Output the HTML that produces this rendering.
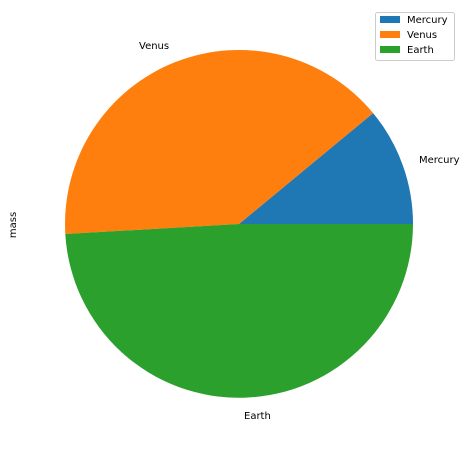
<!DOCTYPE html>
<html><head><meta charset="utf-8"><style>
html,body{margin:0;padding:0;background:#fff;}
svg{display:block;}
text{font-family:"DejaVu Sans","Liberation Sans",sans-serif;font-size:10px;fill:#000;}
</style></head><body>
<svg width="466" height="449" viewBox="0 0 466 449">
<rect width="466" height="449" fill="#fff"/>
<path d="M239,224 L413,224 A174,174 0 0 0 373.1,113.1 Z" fill="#1f77b4"/>
<path d="M239,224 L373.1,113.1 A174,174 0 0 0 65.3,234 Z" fill="#ff7f0e"/>
<path d="M239,224 L65.3,234 A174,174 0 0 0 413,224 Z" fill="#2ca02c"/>
<text x="419" y="163">Mercury</text>
<text x="139" y="49">Venus</text>
<text x="244" y="419">Earth</text>
<text transform="translate(16,225) rotate(-90)" text-anchor="middle">mass</text>
<rect x="375.5" y="12.5" width="79" height="48" rx="2" fill="#fff" fill-opacity="0.8" stroke="#ccc"/>
<rect x="380" y="16" width="20" height="7" fill="#1f77b4"/>
<text x="407" y="23">Mercury</text>
<rect x="380" y="31" width="20" height="7" fill="#ff7f0e"/>
<text x="407" y="38">Venus</text>
<rect x="380" y="46" width="20" height="7" fill="#2ca02c"/>
<text x="407" y="53">Earth</text>
</svg>
</body></html>
